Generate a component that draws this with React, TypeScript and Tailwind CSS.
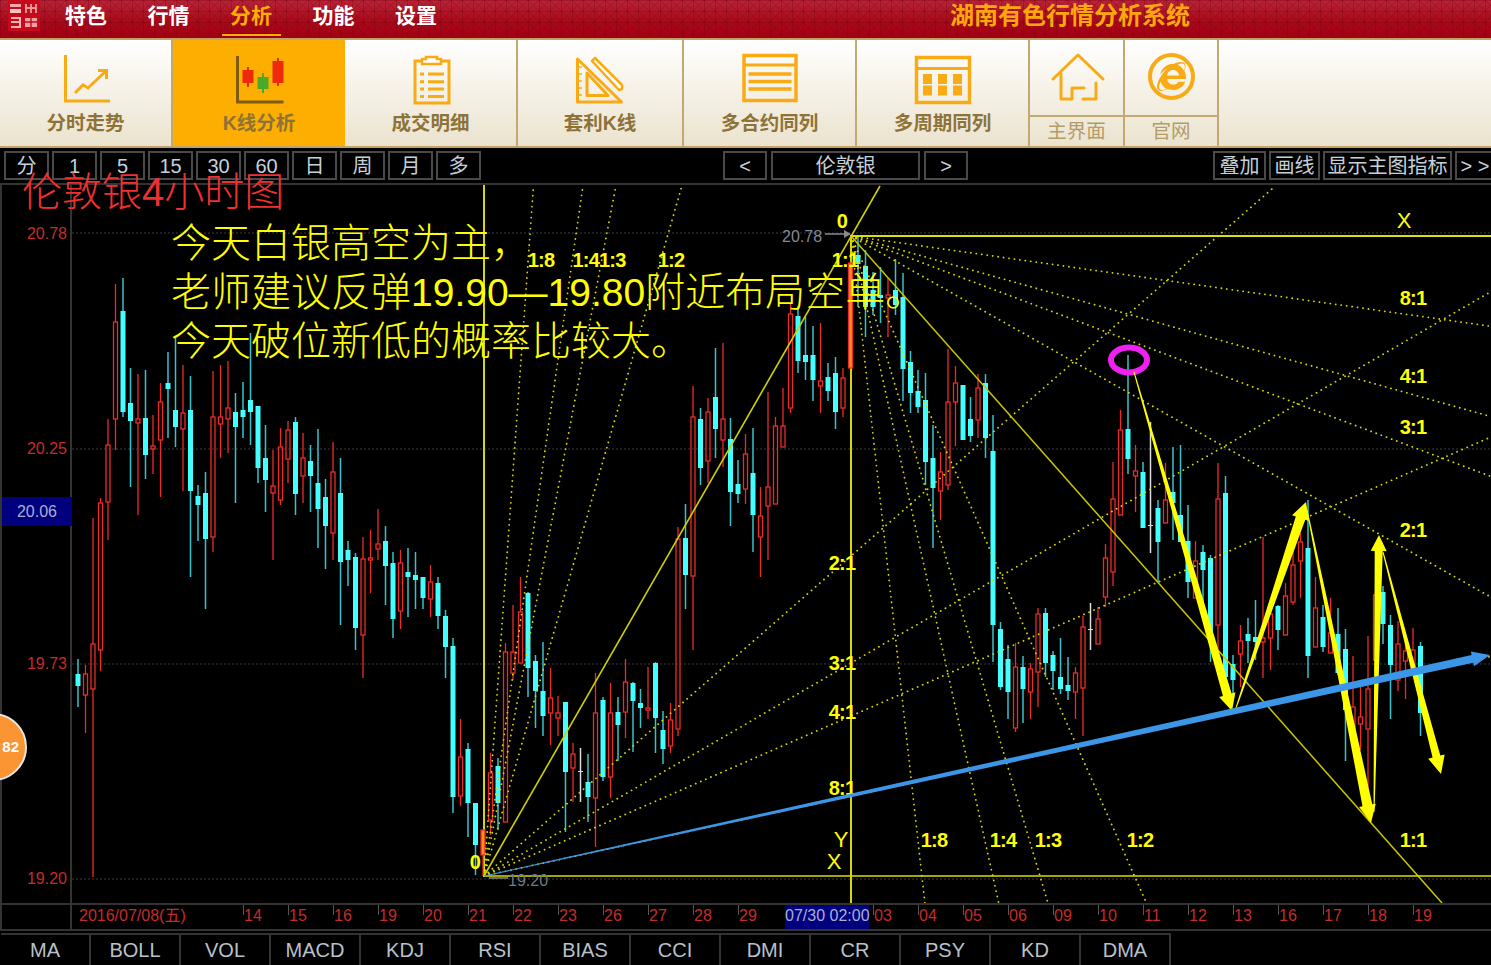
import React from 'react';
import { FaInternetExplorer } from 'react-icons/fa';

// [kind, wick top, body top, body bottom, wick bottom], x = 78 + 7.5 * index
type Candle = [string, number, number, number, number];

const candles: Candle[] = [
  ['c', 659, 674, 686, 707], ['r', 665, 674, 695, 733], ['r', 518, 644, 689, 877], ['r', 498, 503, 650, 671],
  ['r', 419, 445, 502, 540], ['r', 284, 322, 419, 450], ['c', 278, 311, 412, 417], ['c', 368, 403, 421, 487],
  ['r', 374, 419, 423, 515], ['c', 370, 418, 455, 479], ['r', 415, 446, 449, 474], ['r', 383, 402, 440, 497],
  ['c', 352, 383, 389, 438], ['c', 338, 410, 427, 447], ['r', 365, 413, 429, 491], ['c', 376, 410, 491, 577],
  ['c', 485, 496, 505, 541], ['c', 472, 493, 539, 609], ['r', 371, 417, 537, 552], ['r', 365, 417, 424, 458],
  ['r', 361, 408, 419, 453], ['c', 393, 412, 427, 503], ['c', 382, 410, 417, 438], ['c', 333, 400, 412, 445],
  ['c', 406, 406, 468, 483], ['c', 425, 458, 480, 512], ['r', 450, 486, 493, 560], ['r', 428, 447, 500, 505],
  ['r', 421, 430, 459, 483], ['c', 417, 422, 494, 515], ['r', 433, 458, 476, 503], ['c', 445, 461, 476, 512],
  ['c', 429, 483, 509, 548], ['c', 479, 497, 526, 569], ['r', 442, 472, 533, 560], ['c', 458, 493, 562, 625],
  ['c', 541, 550, 560, 586], ['c', 553, 557, 628, 650], ['r', 537, 559, 635, 678], ['r', 530, 558, 560, 593],
  ['r', 509, 544, 549, 560], ['c', 526, 541, 566, 605], ['c', 552, 563, 619, 638], ['r', 550, 563, 611, 629],
  ['c', 548, 572, 577, 617], ['c', 552, 575, 580, 609], ['c', 577, 577, 598, 609], ['r', 565, 582, 599, 617],
  ['c', 577, 583, 616, 629], ['c', 610, 616, 647, 678], ['c', 638, 646, 797, 813], ['r', 719, 757, 796, 806],
  ['c', 743, 749, 803, 837], ['c', 803, 803, 845, 875], ['o', 830, 830, 855, 876], ['r', 753, 773, 820, 835],
  ['c', 758, 766, 803, 830], ['r', 643, 652, 822, 822], ['r', 605, 652, 673, 680], ['r', 577, 612, 663, 663],
  ['c', 592, 593, 668, 697], ['c', 655, 661, 691, 728], ['c', 642, 691, 716, 736], ['r', 668, 698, 713, 745],
  ['r', 696, 713, 718, 736], ['c', 702, 702, 772, 832], ['r', 743, 754, 768, 802], ['w', 748, 771, 772, 802],
  ['c', 754, 782, 797, 822], ['r', 673, 713, 798, 847], ['c', 697, 700, 777, 781], ['r', 683, 713, 777, 798],
  ['c', 697, 712, 725, 761], ['r', 659, 682, 712, 738], ['c', 682, 683, 701, 752], ['c', 689, 703, 708, 728],
  ['r', 667, 708, 710, 719], ['c', 662, 663, 718, 753], ['c', 711, 730, 749, 764], ['r', 703, 720, 746, 753],
  ['r', 527, 539, 729, 736], ['c', 504, 538, 575, 609], ['r', 386, 417, 576, 650], ['c', 408, 419, 468, 485],
  ['r', 398, 412, 461, 483], ['c', 348, 397, 429, 458], ['r', 343, 419, 440, 467], ['c', 418, 439, 492, 526],
  ['c', 460, 484, 494, 503], ['r', 434, 454, 489, 504], ['c', 428, 473, 515, 552], ['r', 487, 516, 537, 577],
  ['r', 392, 487, 506, 560], ['r', 417, 426, 504, 504], ['r', 388, 426, 447, 447], ['r', 303, 314, 408, 413],
  ['c', 306, 316, 361, 373], ['c', 317, 355, 362, 380], ['c', 326, 355, 380, 401], ['r', 323, 381, 386, 413],
  ['c', 363, 377, 391, 401], ['c', 357, 373, 412, 429], ['r', 368, 378, 408, 417], ['o', 263, 263, 368, 368],
  ['c', 235, 255, 264, 307], ['c', 250, 266, 307, 337], ['c', 272, 290, 307, 315], ['c', 267, 295, 298, 323],
  ['r', 278, 295, 298, 337], ['c', 259, 290, 305, 315], ['c', 273, 297, 369, 401], ['c', 351, 362, 393, 413],
  ['c', 370, 391, 407, 413], ['c', 373, 400, 462, 485], ['c', 425, 458, 488, 548], ['r', 452, 472, 491, 520],
  ['r', 349, 402, 485, 490], ['r', 366, 383, 402, 446], ['c', 385, 385, 440, 440], ['c', 397, 419, 436, 442],
  ['r', 374, 388, 420, 438], ['c', 374, 383, 438, 458], ['c', 415, 451, 625, 662], ['c', 622, 629, 687, 690],
  ['c', 645, 659, 692, 719], ['r', 643, 667, 728, 732], ['c', 656, 667, 689, 723], ['r', 663, 669, 692, 719],
  ['r', 608, 614, 672, 707], ['c', 608, 613, 663, 677], ['c', 651, 655, 671, 690], ['c', 638, 677, 689, 694],
  ['c', 657, 685, 691, 700], ['r', 667, 673, 692, 719], ['r', 616, 627, 688, 736], ['w', 603, 629, 630, 650],
  ['r', 607, 619, 644, 644], ['r', 544, 558, 597, 607], ['r', 462, 499, 572, 586], ['r', 410, 430, 515, 515],
  ['c', 355, 429, 459, 474], ['r', 445, 471, 476, 512], ['c', 462, 472, 528, 528], ['w', 422, 525, 526, 553],
  ['c', 500, 508, 542, 582], ['r', 463, 500, 523, 523], ['c', 447, 492, 503, 540], ['c', 445, 515, 542, 542],
  ['c', 505, 541, 582, 598], ['r', 541, 561, 598, 598], ['c', 545, 552, 570, 618], ['c', 555, 558, 638, 662],
  ['r', 463, 499, 625, 652], ['c', 476, 493, 677, 677], ['c', 655, 664, 680, 700], ['r', 625, 641, 654, 687],
  ['c', 618, 634, 641, 663], ['c', 600, 637, 642, 660], ['r', 537, 638, 642, 678], ['r', 600, 614, 638, 670],
  ['c', 605, 606, 630, 650], ['r', 583, 596, 635, 635], ['r', 548, 565, 602, 605], ['r', 533, 542, 561, 598],
  ['c', 500, 548, 656, 678], ['r', 577, 608, 647, 647], ['c', 605, 617, 647, 652], ['r', 598, 633, 653, 653],
  ['c', 608, 634, 673, 675], ['c', 629, 649, 710, 761], ['r', 656, 707, 730, 747], ['r', 687, 717, 724, 750],
  ['r', 636, 689, 729, 787], ['r', 595, 595, 660, 660], ['c', 586, 592, 624, 644], ['c', 615, 625, 665, 719],
  ['r', 621, 644, 680, 691], ['r', 637, 651, 661, 699], ['r', 628, 650, 668, 668], ['c', 642, 646, 713, 736],
];

const gridRows = [233, 449, 664, 879];
const fanDot = '#d6d600';

// from O (484,876) and T (851,236): fractions of the box sides
const ratios = [1 / 2, 1 / 3, 1 / 4, 1 / 8];
const rises = [320, 213, 160, 80];

const fanLines: number[][] = [
  ...ratios.map((r) => [484, 876, 484 + ((876 - 186) / 640) * 367 * r, 186]),
  ...rises.map((d) => {
    const slope = d / 367;
    const x = Math.min(1491, 484 + 690 / slope);
    return [484, 876, x, 876 - slope * (x - 484)];
  }),
  ...ratios.map((r) => [851, 236, 851 + (667 / 640) * 567 * r, 903]),
  ...rises.map((d) => [851, 236, 1491, 236 + (d / 567) * 640]),
];

function arrowPoints(x1: number, y1: number, x2: number, y2: number, w: number, headW: number, headL: number) {
  const len = Math.hypot(x2 - x1, y2 - y1);
  const ux = (x2 - x1) / len;
  const uy = (y2 - y1) / len;
  const nx = -uy;
  const ny = ux;
  const bx = x2 - ux * headL;
  const by = y2 - uy * headL;
  const pts = [
    [x1 + nx * 0.5, y1 + ny * 0.5],
    [bx + (nx * w) / 2, by + (ny * w) / 2],
    [bx + (nx * headW) / 2, by + (ny * headW) / 2],
    [x2, y2],
    [bx - (nx * headW) / 2, by - (ny * headW) / 2],
    [bx - (nx * w) / 2, by - (ny * w) / 2],
    [x1 - nx * 0.5, y1 - ny * 0.5],
  ];
  return pts.map((p) => p.join(',')).join(' ');
}

const yellowArrows = [
  [1134, 372, 1232, 711, 9, 17, 17],
  [1236, 708, 1306, 502, 10, 18, 17],
  [1307, 510, 1371, 823, 10, 17, 18],
  [1374, 812, 1379, 535, 8, 16, 16],
  [1383, 552, 1441, 774, 8, 17, 18],
];

const chartLabels: [string, number, number][] = [
  ['0', 842, 228], ['1:8', 541, 267], ['1:41:3', 599, 267], ['1:2', 671, 267], ['1:1', 845, 267],
  ['8:1', 1413, 305], ['4:1', 1413, 383], ['3:1', 1413, 434], ['2:1', 1413, 537], ['1:1', 1413, 847],
  ['2:1', 842, 570], ['3:1', 842, 670], ['4:1', 842, 719], ['8:1', 842, 795],
  ['1:8', 934, 847], ['1:4', 1003, 847], ['1:3', 1048, 847], ['1:2', 1140, 847],
  ['0', 475, 869],
];

const axisMarks: [string, number, number][] = [
  ['X', 1404, 228], ['Y', 841, 847], ['X', 834, 869],
];

const navItems = ['特色', '行情', '分析', '功能', '设置'];
const periods = ['分', '1', '5', '15', '30', '60', '日', '周', '月', '多'];
const indicators = ['MA', 'BOLL', 'VOL', 'MACD', 'KDJ', 'RSI', 'BIAS', 'CCI', 'DMI', 'CR', 'PSY', 'KD', 'DMA'];
const dates = ['14', '15', '16', '19', '20', '21', '22', '23', '26', '27', '28', '29'];
const dates2 = ['03', '04', '05', '06', '09', '10', '11', '12', '13', '16', '17', '18', '19'];

const amber = '#f9ab16';

const Icon = ({ cx, children }: { cx: number; children: React.ReactNode }) => (
  <svg width={60} height={56} viewBox={`${cx - 30} 50 60 56`} className="block" fill="none">
    {children}
  </svg>
);

const ToolCell = ({ width, label, active, children }: { width: string; label: string; active?: boolean; children: React.ReactNode }) => (
  <div className={`${width} flex flex-col items-center pt-[11px] ${active ? 'bg-[#fdae00]' : 'border-r-2 border-[#c2a971]'}`}>
    {children}
    <div className="mt-[4px] h-[24px] leading-[24px] text-[19.5px] font-bold text-[#8d7338]">{label}</div>
  </div>
);

const SmallCell = ({ width, label, children }: { width: string; label: string; children: React.ReactNode }) => (
  <div className={`${width} flex flex-col border-r-2 border-[#c2a971]`}>
    <div className="h-[79px] flex justify-center pt-[11px] border-b-2 border-[#c2a971]">{children}</div>
    <div className="flex-1 flex items-center justify-center text-[19.5px] text-[#b39c68]">{label}</div>
  </div>
);

const PeriodButton = ({ width, children }: { width: string; children: React.ReactNode }) => (
  <div className={`${width} h-[29px] shrink-0 border-2 border-[#4a4a4a] flex items-center justify-center text-[20px] leading-none text-[#c6d0da]`}>
    {children}
  </div>
);

const Chart = () => (
  <svg width={1419} height={718} viewBox="72 185 1419 718" className="block">
    {gridRows.map((y) => (
      <line key={y} x1={72} y1={y} x2={1491} y2={y} stroke="#3a3a3a" strokeWidth={1} strokeDasharray="2 2" />
    ))}
    <line x1={484} y1={185} x2={484} y2={876} stroke="#d8d800" strokeWidth={2} />
    <line x1={851} y1={236} x2={851} y2={903} stroke="#d8d800" strokeWidth={2} />

    {candles.map(([kind, wickTop, top, bottom, wickBottom], i) => {
      const x = 78 + 7.5 * i;
      if (kind === 'c' || kind === 'w') {
        const wick = kind === 'c' ? '#35c4cc' : '#dddddd';
        const body = kind === 'c' ? '#44ffff' : '#dddddd';
        return (
          <g key={i}>
            <line x1={x} y1={wickTop} x2={x} y2={wickBottom} stroke={wick} strokeWidth={1.5} />
            <rect x={x - 2.5} y={top} width={5} height={bottom - top} fill={body} />
          </g>
        );
      }
      return (
        <g key={i} stroke="#ee2a2a" strokeWidth={1.3}>
          <line x1={x} y1={wickTop} x2={x} y2={top} />
          <line x1={x} y1={bottom} x2={x} y2={wickBottom} />
          <rect x={x - 2} y={top} width={4} height={Math.max(bottom - top, 2)} fill={kind === 'o' ? '#ff8a1e' : 'none'} />
        </g>
      );
    })}

    {fanLines.map(([x1, y1, x2, y2], i) => (
      <line key={i} x1={x1} y1={y1} x2={x2} y2={y2} stroke={fanDot} strokeWidth={1.8} strokeLinecap="round" strokeDasharray="0.1 5.4" />
    ))}
    <line x1={484} y1={876} x2={880} y2={186} stroke="#d0d000" strokeWidth={1.6} />
    <line x1={851} y1={236} x2={1442} y2={903} stroke="#c8c800" strokeWidth={1.5} />
    <line x1={484} y1={876} x2={1491} y2={876} stroke="#dede00" strokeWidth={1.6} />
    <line x1={851} y1={236} x2={1491} y2={236} stroke="#dede00" strokeWidth={2} />

    {chartLabels.map(([t, x, y], i) => (
      <text key={i} x={x} y={y} textAnchor="middle" fill="#ffff00" fontSize={20} fontWeight={700} letterSpacing={-0.8}>
        {t}
      </text>
    ))}
    {axisMarks.map(([t, x, y], i) => (
      <text key={i} x={x} y={y} textAnchor="middle" fill="#ffff00" fontSize={22}>
        {t}
      </text>
    ))}
    <text x={782} y={242} fill="#7f8b99" fontSize={16}>20.78</text>
    <line x1={825} y1={234} x2={846} y2={234} stroke="#8a8a8a" strokeWidth={1.5} />
    <polygon points="844,230 851,234 844,238" fill="#8a8a8a" />
    <text x={508} y={886} fill="#6f7b88" fontSize={16}>19.20</text>
    <line x1={489} y1={878} x2={508} y2={878} stroke="#8a8a8a" strokeWidth={1.5} />

    <ellipse cx={1129} cy={360} rx={18} ry={12.5} fill="none" stroke="#ee22ee" strokeWidth={6} />
    {yellowArrows.map((a, i) => (
      <polygon key={i} points={arrowPoints(a[0], a[1], a[2], a[3], a[4], a[5], a[6])} fill="#ffff00" />
    ))}
    <polygon points={arrowPoints(484, 876, 1490, 655, 8, 15, 18)} fill="#3b96e8" />
  </svg>
);

export default function App() {
  return (
    <div className="relative w-[1491px] h-[965px] overflow-hidden bg-black font-['Liberation_Sans','Noto_Sans_CJK_SC',sans-serif]">
      {/* red title bar */}
      <div className="relative h-[38px] flex items-center bg-gradient-to-b from-[#b8243a] via-[#a90c1c] to-[#a40012]">
        <div className="absolute inset-0 bg-[linear-gradient(#78000c55_1px,transparent_1px),linear-gradient(90deg,#78000c55_1px,transparent_1px),linear-gradient(45deg,transparent_47%,#78000c50_47%,#78000c50_53%,transparent_53%),linear-gradient(-45deg,transparent_47%,#78000c50_47%,#78000c50_53%,transparent_53%)] bg-[length:11px_11px]" />
        <svg width={32} height={31} viewBox="0 0 32 31" className="relative ml-[8px] shrink-0 self-start blur-[0.6px]">
          <rect width={32} height={31} rx={1} fill="#c40a1c" />
          <rect x={2} y={4} width={11} height={3} fill="#f2a8a8" />
          <rect x={2} y={9} width={11} height={4} fill="#f6c4c0" />
          <path d="M18 4v9M23 4v9M28 4v9M17 8h12" stroke="#eb9a9a" strokeWidth={1.8} />
          <path d="M3 18h9v9H3M3 22h9" stroke="#f4b4b0" strokeWidth={2} fill="none" />
          <rect x={17} y={18} width={12} height={9} fill="#f0a0a0" />
          <path d="M17 22h12M23 18v9" stroke="#c40a1c" strokeWidth={1.4} />
        </svg>
        <nav className="relative ml-[25px] flex gap-[40.5px] text-[21px] font-bold text-white">
          {navItems.map((n) => (
            <div key={n} className={`relative w-[42px] leading-[26px] whitespace-nowrap -mt-[7px] ${n === '分析' ? 'text-[#fdae00]' : ''}`}>
              {n}
              {n === '分析' && <div className="absolute left-[-8px] right-[-9px] top-[31px] h-[2px] bg-[#fdae00]" />}
            </div>
          ))}
        </nav>
        <div className="relative ml-[513px] -mt-[6px] text-[24px] font-bold text-[#fda70f] whitespace-nowrap">湖南有色行情分析系统</div>
      </div>

      {/* tool ribbon */}
      <div className="h-[110px] flex border-y-2 border-[#c2a268] bg-gradient-to-b from-white to-[#ebe3ce] text-nowrap">
        <ToolCell width="w-[173px]" label="分时走势">
          <Icon cx={86}>
            <path d="M65.500 54v46H110" stroke={amber} strokeWidth={3} />
            <path d="M75 92l8-8 5 3 18-17" stroke={amber} strokeWidth={3} />
            <path d="M98 69.500h8.500V78" stroke={amber} strokeWidth={3} />
          </Icon>
        </ToolCell>
        <ToolCell width="w-[172px]" label="K线分析" active>
          <Icon cx={259.5}>
            <path d="M238 55v46h46" stroke="#7d5c10" strokeWidth={3} />
            <path d="M248.500 66v20" stroke="#ee2a0c" strokeWidth={2} />
            <rect x={243} y={69} width={11} height={13} fill="#ee2a0c" />
            <path d="M263.500 72v20" stroke="#4aa82a" strokeWidth={2} />
            <rect x={258} y={76} width={11} height={12} fill="#4aa82a" />
            <path d="M278.500 57v28" stroke="#ee2a0c" strokeWidth={2} />
            <rect x={273} y={60} width={11} height={22} fill="#ee2a0c" />
          </Icon>
        </ToolCell>
        <ToolCell width="w-[173px]" label="成交明细">
          <Icon cx={431}>
            <rect x={415} y={60} width={34} height={42} stroke={amber} strokeWidth={3} />
            <path d="M422 60v-2h4v-2h11v2h4v2v3h-19z" fill="#fff" stroke={amber} strokeWidth={2.500} />
            <path d="M420 73h4M428 73h16M420 80.700h4M428 80.700h16M420 88h4M428 88h16M420 95.500h4M428 95.500h16" stroke={amber} strokeWidth={3} />
          </Icon>
        </ToolCell>
        <ToolCell width="w-[166px]" label="套利K线">
          <Icon cx={601}>
            <path d="M578.500 58v43h44z" stroke={amber} strokeWidth={3} strokeLinejoin="round" />
            <path d="M588 72v22.500h21z" stroke={amber} strokeWidth={3} strokeLinejoin="round" />
            <path d="M579 66h4M579 73h4M579 80h4M579 87h4M579 94h4" stroke={amber} strokeWidth={1.500} />
            <path d="M593 60l3-3 27 27v4l-3 1z" stroke={amber} strokeWidth={2.500} strokeLinejoin="round" fill="#fff" />
          </Icon>
        </ToolCell>
        <ToolCell width="w-[173px]" label="多合约同列">
          <Icon cx={770.5}>
            <rect x={744.5} y={54.500} width={52} height={45} stroke={amber} strokeWidth={3.500} />
            <path d="M745 64h51" stroke={amber} strokeWidth={3} />
            <path d="M749 73h43M749 80.500h43M749 88h43" stroke={amber} strokeWidth={3.500} />
          </Icon>
        </ToolCell>
        <ToolCell width="w-[173px]" label="多周期同列">
          <Icon cx={943}>
            <rect x={916.5} y={56.500} width={53} height={45} stroke={amber} strokeWidth={3.500} />
            <path d="M917 67.500h52" stroke={amber} strokeWidth={3} />
            <g fill={amber}>
              <rect x={923} y={73} width={9} height={10} />
              <rect x={938} y={73} width={9} height={10} />
              <rect x={953} y={73} width={9} height={10} />
              <rect x={923} y={84.500} width={9} height={10} />
              <rect x={938} y={84.500} width={9} height={10} />
              <rect x={953} y={84.500} width={9} height={10} />
            </g>
          </Icon>
        </ToolCell>
        <SmallCell width="w-[95px]" label="主界面">
          <Icon cx={1077}>
            <path d="M1053 78l25-24 25 24" stroke={amber} strokeWidth={3} strokeLinecap="round" strokeLinejoin="round" />
            <path d="M1061 73v25h11V87h12M1096 82v16h-13" stroke={amber} strokeWidth={3} strokeLinecap="round" strokeLinejoin="round" />
          </Icon>
        </SmallCell>
        <SmallCell width="w-[94px]" label="官网">
          <div className="w-[47px] h-[47px] mt-[2px] rounded-full border-[4px] border-[#f9ab16] flex items-center justify-center">
            <FaInternetExplorer size={29} color={amber} />
          </div>
        </SmallCell>
      </div>

      {/* period buttons */}
      <div className="h-[37px] flex items-start pt-[1px] pl-[4px] border-b-2 border-[#333333]">
        <div className="flex gap-[3px] mt-[2px]">
          {periods.map((p) => (
            <PeriodButton key={p} width="w-[45px]">{p}</PeriodButton>
          ))}
        </div>
        <div className="flex gap-[4px] ml-[242px] mt-[2px]">
          <PeriodButton width="w-[44px]">&lt;</PeriodButton>
          <PeriodButton width="w-[149px]">伦敦银</PeriodButton>
          <PeriodButton width="w-[44px]">&gt;</PeriodButton>
        </div>
        <div className="flex gap-[3px] ml-[245px] mt-[2px]">
          <PeriodButton width="w-[53px]">叠加</PeriodButton>
          <PeriodButton width="w-[51px]">画线</PeriodButton>
          <PeriodButton width="w-[129px]">显示主图指标</PeriodButton>
          <PeriodButton width="w-[40px]">&gt; &gt;</PeriodButton>
        </div>
      </div>

      {/* chart area */}
      <div className="relative flex h-[718px]">
        <div className="w-[72px] shrink-0 border-l-2 border-r-2 border-[#333333] flex flex-col justify-between items-end pt-[39px] pb-[14px] pr-[3px] text-[16px] leading-[20px] text-[#c62b2b]">
          {['20.78', '20.25', '19.73', '19.20'].map((p) => (
            <div key={p}>{p}</div>
          ))}
        </div>
        <Chart />
        <div className="absolute left-[2px] top-[312px] w-[70px] h-[29px] bg-[#00007f] flex items-center justify-center text-[16px] text-[#a9afd0]">20.06</div>
        <div className="absolute left-[-41px] top-[528px] w-[68px] h-[68px] rounded-full bg-[#fb9433] border-2 border-[#e8e8e8] flex items-center justify-end pr-[6px] text-[15px] font-bold text-white">82</div>
      </div>

      {/* date axis */}
      <div className="h-[28px] flex border-y-2 border-[#333333] text-[16px] leading-[21px] text-[#c62b2b]">
        <div className="w-[72px] shrink-0 border-l-2 border-r-2 border-[#333333]" />
        <div className="w-[171px] shrink-0 pl-[7px]">2016/07/08(五)</div>
        {dates.map((d, i) => (
          <div key={i} className="w-[45px] shrink-0 pl-[1px] relative">
            <div className="absolute left-0 top-0 h-[10px] w-px bg-[#555555]" />
            {d}
          </div>
        ))}
        <div className="w-[2px] shrink-0" />
        <div className="w-[84px] shrink-0 h-[24px] bg-[#00007f] text-center text-[#a9afd0] whitespace-nowrap">07/30 02:00</div>
        <div className="w-[4px] shrink-0" />
        {dates2.map((d, i) => (
          <div key={i} className="w-[45px] shrink-0 pl-[1px] relative">
            <div className="absolute left-0 top-0 h-[10px] w-px bg-[#555555]" />
            {d}
          </div>
        ))}
      </div>

      {/* indicator tabs */}
      <div className="mt-[2px] flex h-[32px] pl-[1px]">
        {indicators.map((n) => (
          <div key={n} className="w-[90px] border-t-2 border-r-2 border-[#333333] flex items-center justify-center text-[20px] text-[#b9c1c9]">
            {n}
          </div>
        ))}
      </div>

      {/* annotations pasted over the chart */}
      <div className="absolute left-[22px] top-[168px] text-[40px] leading-[49px] font-light text-[#f03030] whitespace-nowrap">伦敦银4小时图</div>
      <div className="absolute left-[171px] top-[219px] text-[40px] leading-[49px] font-light text-[#ffff00] whitespace-nowrap">
        <div>今天白银高空为主，</div>
        <div>
          老师建议反弹<span className="text-[39px]">19.90—19.80</span>附近布局空单。
        </div>
        <div>今天破位新低的概率比较大。</div>
      </div>
    </div>
  );
}
